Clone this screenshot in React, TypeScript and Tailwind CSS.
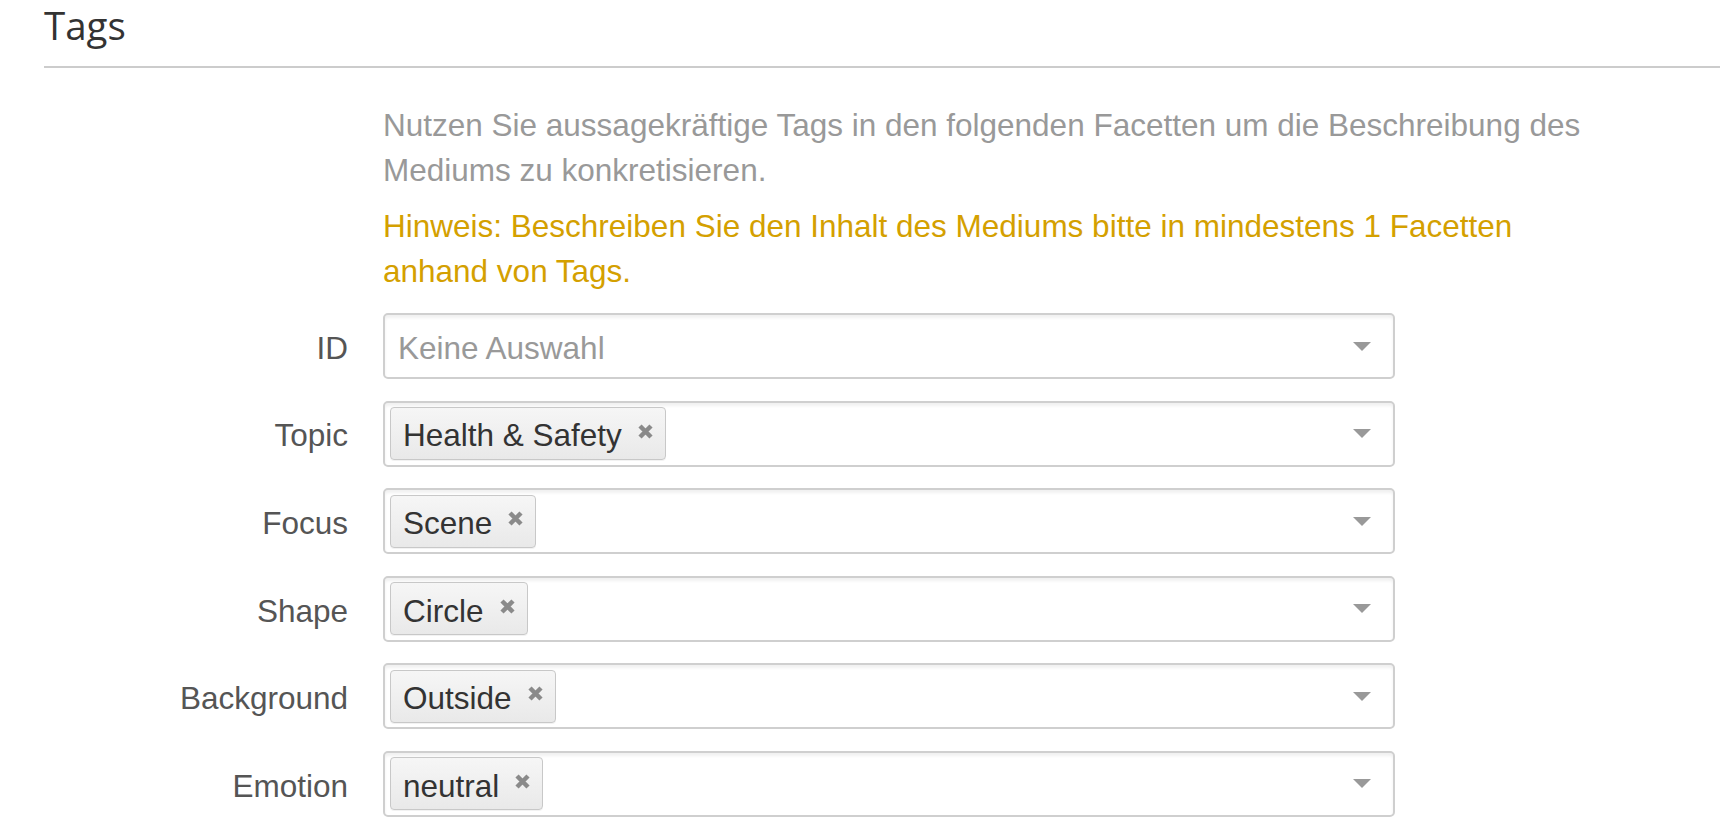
import React from "react"

type Row = { label: string; tag?: string }

const rows: Row[] = [
  { label: "ID" },
  { label: "Topic", tag: "Health & Safety" },
  { label: "Focus", tag: "Scene" },
  { label: "Shape", tag: "Circle" },
  { label: "Background", tag: "Outside" },
  { label: "Emotion", tag: "neutral" },
]

function Caret() {
  return (
    <svg width="18" height="9" viewBox="0 0 18 9" className="shrink-0">
      <path d="M0 0 L18 0 L9 9 Z" fill="#999" />
    </svg>
  )
}

function CloseIcon() {
  return (
    <svg width="17" height="17" viewBox="0 0 17 17" className="shrink-0 -mt-[5px]">
      <path d="M3 3 L14 14 M14 3 L3 14" stroke="#8a8a8a" strokeWidth="4.5" strokeLinecap="butt" />
    </svg>
  )
}

function TagChip({ text }: { text: string }) {
  return (
    <span className="flex h-[53px] items-center gap-[15px] rounded-[4px] border border-[#c8c8c8] bg-gradient-to-b from-[#f6f6f6] to-[#e9e9e9] pl-[12px] pr-[11px] text-[#333] shadow-[0_1px_0_rgba(0,0,0,0.05)]">
      <span className="pt-[5px]">{text}</span>
      <CloseIcon />
    </span>
  )
}

function FacetSelect({ tag }: { tag?: string }) {
  return (
    <div className="flex h-[66px] w-[1012px] items-center justify-between rounded-[5px] border-2 border-[#cfcfcf] bg-white pl-[5px] pr-[22px] shadow-[inset_0_3px_3px_rgba(0,0,0,0.06)]">
      {tag ? (
        <TagChip text={tag} />
      ) : (
        <span className="pl-[8px] pt-[5px] text-[#999]">Keine Auswahl</span>
      )}
      <Caret />
    </div>
  )
}

export default function App() {
  return (
    <div className="h-[833px] w-full overflow-hidden bg-white font-['Liberation_Sans'] text-[31.5px]">
      {/* Section header */}
      <div className="ml-[44px]">
        <h3 className="pt-[2px] font-['Open_Sans'] text-[38.5px] leading-[46px] text-[#333]">Tags</h3>
        <div className="mt-[18px] h-[2px] bg-[#cccccc]" />
      </div>

      {/* Hint text */}
      <div className="ml-[383px] mt-[35px] w-[1225px] leading-[45px]">
        <p className="text-[#999]">
          Nutzen Sie aussagekräftige Tags in den folgenden Facetten um die Beschreibung des Mediums zu konkretisieren.
        </p>
        <p className="mt-[11px] text-[#d4a000]">
          Hinweis: Beschreiben Sie den Inhalt des Mediums bitte in mindestens 1 Facetten anhand von Tags.
        </p>
      </div>

      {/* Facet rows */}
      <div className="mt-[19px] flex flex-col gap-[21.6px]">
        {rows.map((r) => (
          <div key={r.label} className="flex items-center">
            <label className="w-[349px] pr-[1px] pt-[5px] text-right text-[#555]">{r.label}</label>
            <div className="ml-[34px]">
              <FacetSelect tag={r.tag} />
            </div>
          </div>
        ))}
      </div>
    </div>
  )
}
